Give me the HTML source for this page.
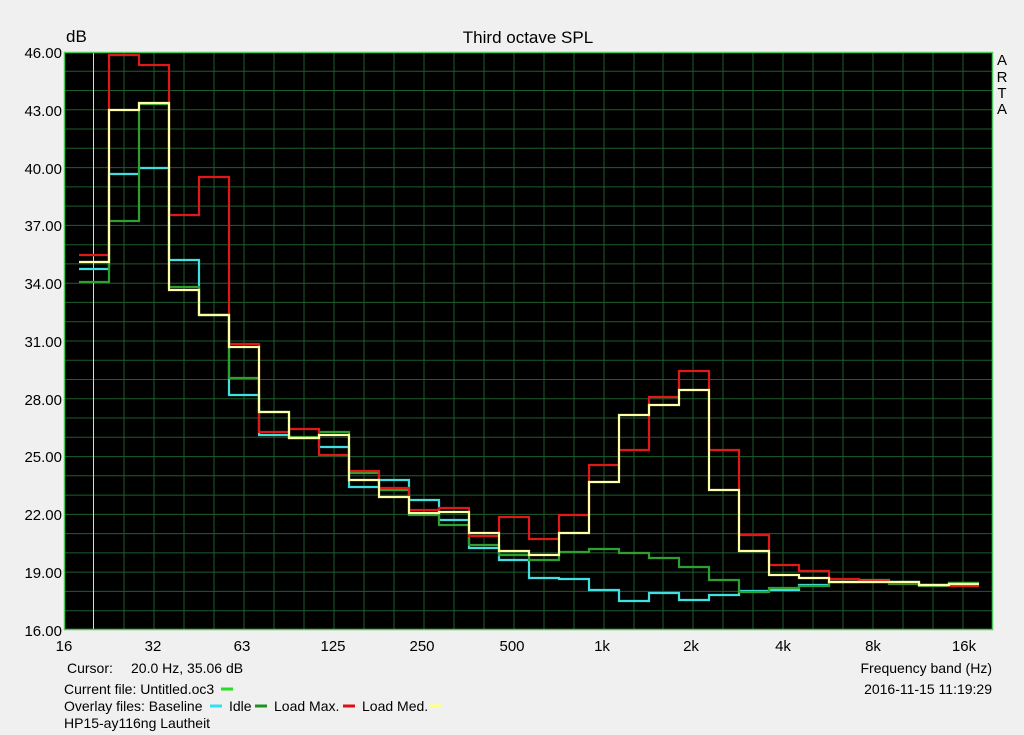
<!DOCTYPE html>
<html><head><meta charset="utf-8"><style>
html,body{margin:0;padding:0;background:#f0f0f0;width:1024px;height:735px;overflow:hidden}
svg{display:block;font-family:"Liberation Sans",sans-serif}
</style></head><body>
<svg width="1024" height="735" viewBox="0 0 1024 735">
<rect width="1024" height="735" fill="#f0f0f0"/>
<rect x="64" y="52" width="929" height="578" fill="#000"/>
<g id="g" stroke="#1d5e2c" stroke-width="1" fill="none">
<path d="M64 71.3H993M64 90.5H993M64 109.8H993M64 129H993M64 148.3H993M64 167.6H993M64 186.9H993M64 206.1H993M64 225.4H993M64 244.7H993M64 263.9H993M64 283.2H993M64 302.4H993M64 321.7H993M64 341H993M64 360.2H993M64 379.5H993M64 398.8H993M64 418H993M64 437.3H993M64 456.6H993M64 475.8H993M64 495.1H993M64 514.4H993M64 533.6H993M64 552.9H993M64 572.1H993M64 591.4H993M64 610.7H993"/>
<path d="M124 52V630M154 52V630M184 52V630M214 52V630M244 52V630M274 52V630M304 52V630M334 52V630M364 52V630M394 52V630M424 52V630M454 52V630M484 52V630M514 52V630M544 52V630M574 52V630M604 52V630M634 52V630M663 52V630M693 52V630M723 52V630M753 52V630M783 52V630M813 52V630M843 52V630M873 52V630M903 52V630M933 52V630M963 52V630"/>
</g>
<line x1="93.5" y1="52" x2="93.5" y2="630" stroke="#e8e08a" stroke-width="1"/>
<rect x="64.5" y="52.5" width="928" height="577" fill="none" stroke="#4cc85a" stroke-width="1.5"/>
<g fill="none" stroke-width="2.2">
<path stroke="#40e0e0" d="M79 269H109V174H139V168H169V260H199V315H229V395H259V435H289V438H319V447H349V487H379V480H409V500H439V520H469V548H499V560H529V578H559V579H589V590H619V601H649V593H679V600H709V595H739V591H769V590H799V585H829V582H859V582H889V582H919V585H949V583H979"/>
<path stroke="#2ea02e" d="M79 282H109V221H139V104H169V287H199V315H229V378H259V412H289V437H319V432H349V473H379V490H409V515H439V525H469V545H499V555H529V560H559V552H589V549H619V553H649V558H679V567H709V580H739V592H769V588H799V586H829V582H859V580H889V584H919V586H949V583H979"/>
<path stroke="#e01818" d="M79 255H109V55H139V65H169V215H199V177H229V344H259V432H289V429H319V455H349V471H379V488H409V510H439V508H469V536H499V517H529V539H559V515H589V465H619V450H649V397H679V371H709V450H739V535H769V565H799V571H829V579H859V581H889V583H919V585H949V586H979"/>
<path stroke="#ffffa8" d="M79 262H109V110H139V103H169V290H199V315H229V347H259V412H289V438H319V435H349V480H379V497H409V513H439V512H469V533H499V551H529V555H559V533H589V482H619V415H649V405H679V390H709V490H739V551H769V575H799V578H829V582H859V582H889V582H919V585H949V584H979"/>
</g>
<g font-size="15" fill="#000">
<text x="528" y="43" text-anchor="middle" font-size="17">Third octave SPL</text>
<text x="66" y="42" font-size="17">dB</text>
<g text-anchor="end">
<text x="62" y="58">46.00</text><text x="62" y="116">43.00</text><text x="62" y="174">40.00</text><text x="62" y="231">37.00</text><text x="62" y="289">34.00</text><text x="62" y="347">31.00</text><text x="62" y="405">28.00</text><text x="62" y="462">25.00</text><text x="62" y="520">22.00</text><text x="62" y="578">19.00</text><text x="62" y="636">16.00</text>
</g>
<g text-anchor="middle">
<text x="64" y="651">16</text><text x="153" y="651">32</text><text x="242" y="651">63</text><text x="333" y="651">125</text><text x="422" y="651">250</text><text x="512" y="651">500</text><text x="602" y="651">1k</text><text x="691" y="651">2k</text><text x="783" y="651">4k</text><text x="873" y="651">8k</text><text x="964" y="651">16k</text>
<text x="1002" y="65">A</text><text x="1002" y="82">R</text><text x="1002" y="98">T</text><text x="1002" y="114">A</text>
</g>
<g font-size="14">
<text x="67" y="673">Cursor:</text><text x="131" y="673">20.0 Hz, 35.06 dB</text>
<text x="64" y="694">Current file: Untitled.oc3</text>
<text x="64" y="711">Overlay files: Baseline</text>
<text x="229" y="711">Idle</text>
<text x="274" y="711">Load Max.</text>
<text x="362" y="711">Load Med.</text>
<text x="64" y="728">HP15-ay116ng Lautheit</text>
<text x="992" y="673" text-anchor="end">Frequency band (Hz)</text>
<text x="992" y="694" text-anchor="end">2016-11-15  11:19:29</text>
</g>
</g>
<g stroke-width="3">
<line x1="221" y1="689" x2="233" y2="689" stroke="#20e020"/>
<line x1="210" y1="706" x2="222" y2="706" stroke="#30e0f0"/>
<line x1="255" y1="706" x2="267" y2="706" stroke="#209020"/>
<line x1="343" y1="706" x2="355" y2="706" stroke="#e01010"/>
<line x1="429" y1="706" x2="441" y2="706" stroke="#ffff80"/>
</g>
</svg>
</body></html>
